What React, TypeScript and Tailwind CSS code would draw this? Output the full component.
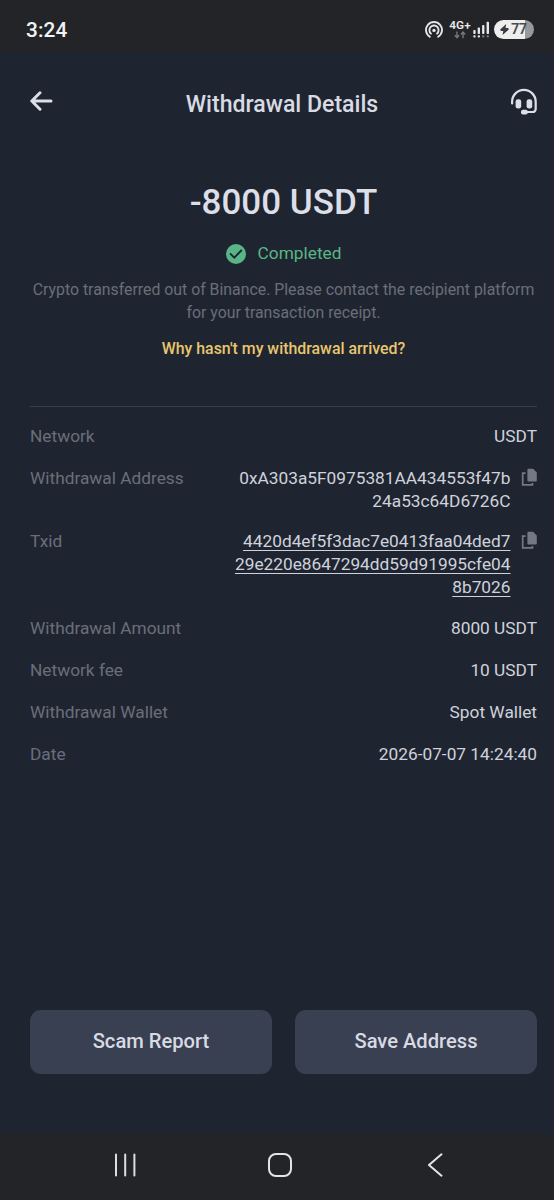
import React from "react";

function StatusBar() {
  return (
    <header className="flex h-[52px] shrink-0 items-center justify-between bg-[#232428] pt-[7px] pr-[20px] pl-[26px]">
      <span className="text-[20.8px] leading-6 font-medium tracking-[0.1px] text-[#f2f2f4]">3:24</span>
      <div className="flex items-center">
        <svg width="18" height="18" viewBox="0 0 18 18" fill="none" stroke="#e4e4e8" strokeWidth="1.9" strokeLinecap="round">
          <path d="M4.8 15.8a8 8 0 1 1 8.4 0" />
          <path d="M6 12.6a4.6 4.6 0 1 1 6 0" />
          <circle cx="9" cy="9.4" r="1.7" fill="#e4e4e8" stroke="none" />
        </svg>
        <div className="ml-[6px] flex w-[22px] flex-col items-center">
          <span className="text-[11.8px] leading-[11px] font-semibold whitespace-nowrap text-[#e8e8ec]">4G+</span>
          <svg width="12" height="8" viewBox="0 0 12 8" fill="none" stroke="#77787d" strokeWidth="1.4">
            <path d="M3 0.5v6M0.8 4.3 3 6.7l2.2-2.4M9 7.3v-6M6.8 3.5 9 1.1l2.2 2.4" />
          </svg>
        </div>
        <svg className="ml-[2px]" width="17" height="18" viewBox="0 0 17 18" fill="#e8e8ec">
          <rect x="0.3" y="9" width="2.3" height="4" rx="0.8" />
          <rect x="4.7" y="6.5" width="2.3" height="6.5" rx="0.8" />
          <rect x="9.1" y="4" width="2.3" height="9" rx="0.8" />
          <rect x="13.6" y="0.8" width="2.4" height="12.2" rx="0.8" />
          <rect x="0.3" y="14.3" width="2.3" height="2.3" rx="0.8" />
          <rect x="4.7" y="14.3" width="2.3" height="2.3" rx="0.8" />
          <rect x="9.1" y="14.3" width="2.3" height="2.3" rx="0.8" fill="#77787d" />
          <rect x="13.6" y="14.3" width="2.3" height="2.3" rx="0.8" fill="#77787d" />
        </svg>
        <div className="ml-[4px] flex h-[19px] w-[40px] items-center rounded-full bg-linear-to-r from-[#eeeeef] from-78% to-[#98999c] to-78% pl-[6px]">
          <svg width="9" height="11" viewBox="0 0 9 11" fill="#3a3b40">
            <path d="M6.2 0 .2 5.6l.6 1.4h2.5L2.6 11l6.2-5.6-.5-1.4H5.6z" />
          </svg>
          <span className="ml-[2px] text-[14.5px] leading-4 font-semibold tracking-[-0.6px] text-[#4a4b50]">77</span>
        </div>
      </div>
    </header>
  );
}

function CopyIcon() {
  return (
    <svg className="mt-px ml-[10.5px] shrink-0" width="16" height="19" viewBox="0 0 16 19">
      <path d="M7.4 0.8h4.6L15.8 4.6v8a1 1 0 0 1-1 1H7.4a1 1 0 0 1-1-1V1.8a1 1 0 0 1 1-1z" fill="#747884" />
      <path d="M4.6 5.2H1.7v11.6h9.7v-1.9" fill="none" stroke="#747884" strokeWidth="1.7" />
    </svg>
  );
}

function Row({ label, lines, linked, copy }: { label: string; lines: string[]; linked?: boolean; copy?: boolean }) {
  return (
    <div className={copy ? "-mb-[1.6px] flex text-[17.3px] leading-[23px]" : "flex text-[17.3px] leading-[23px]"}>
      <dt className="mr-auto text-[#6a6e79]">{label}</dt>
      <dd className={linked ? "text-right text-[#cfd2dc] underline decoration-1 underline-offset-[3px]" : "text-right text-[#cfd2dc]"}>
        {lines.map((line) => (
          <div key={line}>{line}</div>
        ))}
      </dd>
      {copy && <CopyIcon />}
    </div>
  );
}

export default function App() {
  return (
    <div className="flex h-[1200px] w-[554px] flex-col overflow-hidden bg-[#1f2530] font-['Roboto',sans-serif]">
      <StatusBar />
      <main className="flex grow flex-col pr-[17px] pl-[30px]">
        <div className="mt-[37px] flex h-[32px] items-center justify-between">
          <svg className="-mt-[8px]" width="24" height="22" viewBox="0 0 24 22" fill="none" stroke="#dcdee8" strokeWidth="3" strokeLinecap="round" strokeLinejoin="round">
            <path d="M21 11H2M10 2.8 1.8 11l8.2 8.2" />
          </svg>
          <h1 className="text-[23.1px] leading-8 font-medium text-[#d8dae4]">Withdrawal Details</h1>
          <svg width="27" height="27" viewBox="0 0 27 27" className="-mt-[8px]" fill="none" stroke="#dcdee8" strokeWidth="2.2" strokeLinecap="round">
            <path d="M2.1 15.4V13.7a11.8 11.8 0 0 1 23.6 0V21a3 3 0 0 1-3 3h-6" />
            <rect x="5.6" y="11.2" width="5.6" height="9.4" rx="2.4" fill="#dcdee8" stroke="none" />
            <rect x="16.6" y="11.2" width="5.6" height="9.4" rx="2.4" fill="#dcdee8" stroke="none" />
            <rect x="11" y="21.8" width="6.8" height="4.6" rx="2" fill="#dcdee8" stroke="none" />
          </svg>
        </div>
        <section className="mt-[60px] flex flex-col items-center text-center">
          <p className="text-[35px] leading-[44px] font-medium text-[#dcdee8]">-8000 USDT</p>
          <div className="mt-[17px] flex items-center gap-[12px]">
            <svg width="20" height="20" viewBox="0 0 20 20">
              <circle cx="10" cy="10" r="10" fill="#5ab586" />
              <path d="m4 9.4 4.3 4.2L15.8 6" fill="none" stroke="#1f2530" strokeWidth="1.9" />
            </svg>
            <span className="-mt-px text-[17.3px] leading-6 text-[#5ab586]">Completed</span>
          </div>
          <p className="mt-[12.5px] text-[15.85px] leading-[23.5px] whitespace-nowrap text-[#6a6e79]">
            Crypto transferred out of Binance. Please contact the recipient platform
            <br />
            for your transaction receipt.
          </p>
          <p className="mt-[12.5px] text-[15.88px] leading-6 font-medium text-[#e8c56e]">Why hasn't my withdrawal arrived?</p>
        </section>
        <dl className="mt-[45px] flex flex-col gap-[19px] border-t border-[#393e48] pt-[18px]">
          <Row label="Network" lines={["USDT"]} />
          <Row label="Withdrawal Address" lines={["0xA303a5F0975381AA434553f47b", "24a53c64D6726C"]} copy />
          <Row label="Txid" lines={["4420d4ef5f3dac7e0413faa04ded7", "29e220e8647294dd59d91995cfe04", "8b7026"]} linked copy />
          <Row label="Withdrawal Amount" lines={["8000 USDT"]} />
          <Row label="Network fee" lines={["10 USDT"]} />
          <Row label="Withdrawal Wallet" lines={["Spot Wallet"]} />
          <Row label="Date" lines={["2026-07-07 14:24:40"]} />
        </dl>
        <div className="mt-auto mb-[60px] grid grid-cols-2 gap-[23px]">
          <button className="h-[64px] rounded-[11px] bg-[#394051] pb-px text-[20.15px] font-medium text-[#d8dae4]">Scam Report</button>
          <button className="h-[64px] rounded-[11px] bg-[#394051] pb-px text-[20.15px] font-medium text-[#d8dae4]">Save Address</button>
        </div>
      </main>
      <nav className="flex h-[66px] shrink-0 items-center bg-[#232428] pb-[4px] pl-[113px]">
        <svg width="24" height="24" viewBox="0 0 24 24" stroke="#dedee2" strokeWidth="2" strokeLinecap="round">
          <path d="M3 1.5v21M12.2 1.5v21M21.4 1.5v21" />
        </svg>
        <svg className="ml-[131px]" width="24" height="24" viewBox="0 0 24 24" fill="none" stroke="#e4e4e8" strokeWidth="2">
          <rect x="1" y="1" width="22" height="22" rx="7" />
        </svg>
        <svg className="ml-[135px]" width="16" height="24" viewBox="0 0 16 24" fill="none" stroke="#e4e4e8" strokeWidth="2" strokeLinecap="round" strokeLinejoin="round">
          <path d="M14.5 1.3 2 12l12.5 10.7" />
        </svg>
      </nav>
    </div>
  );
}
